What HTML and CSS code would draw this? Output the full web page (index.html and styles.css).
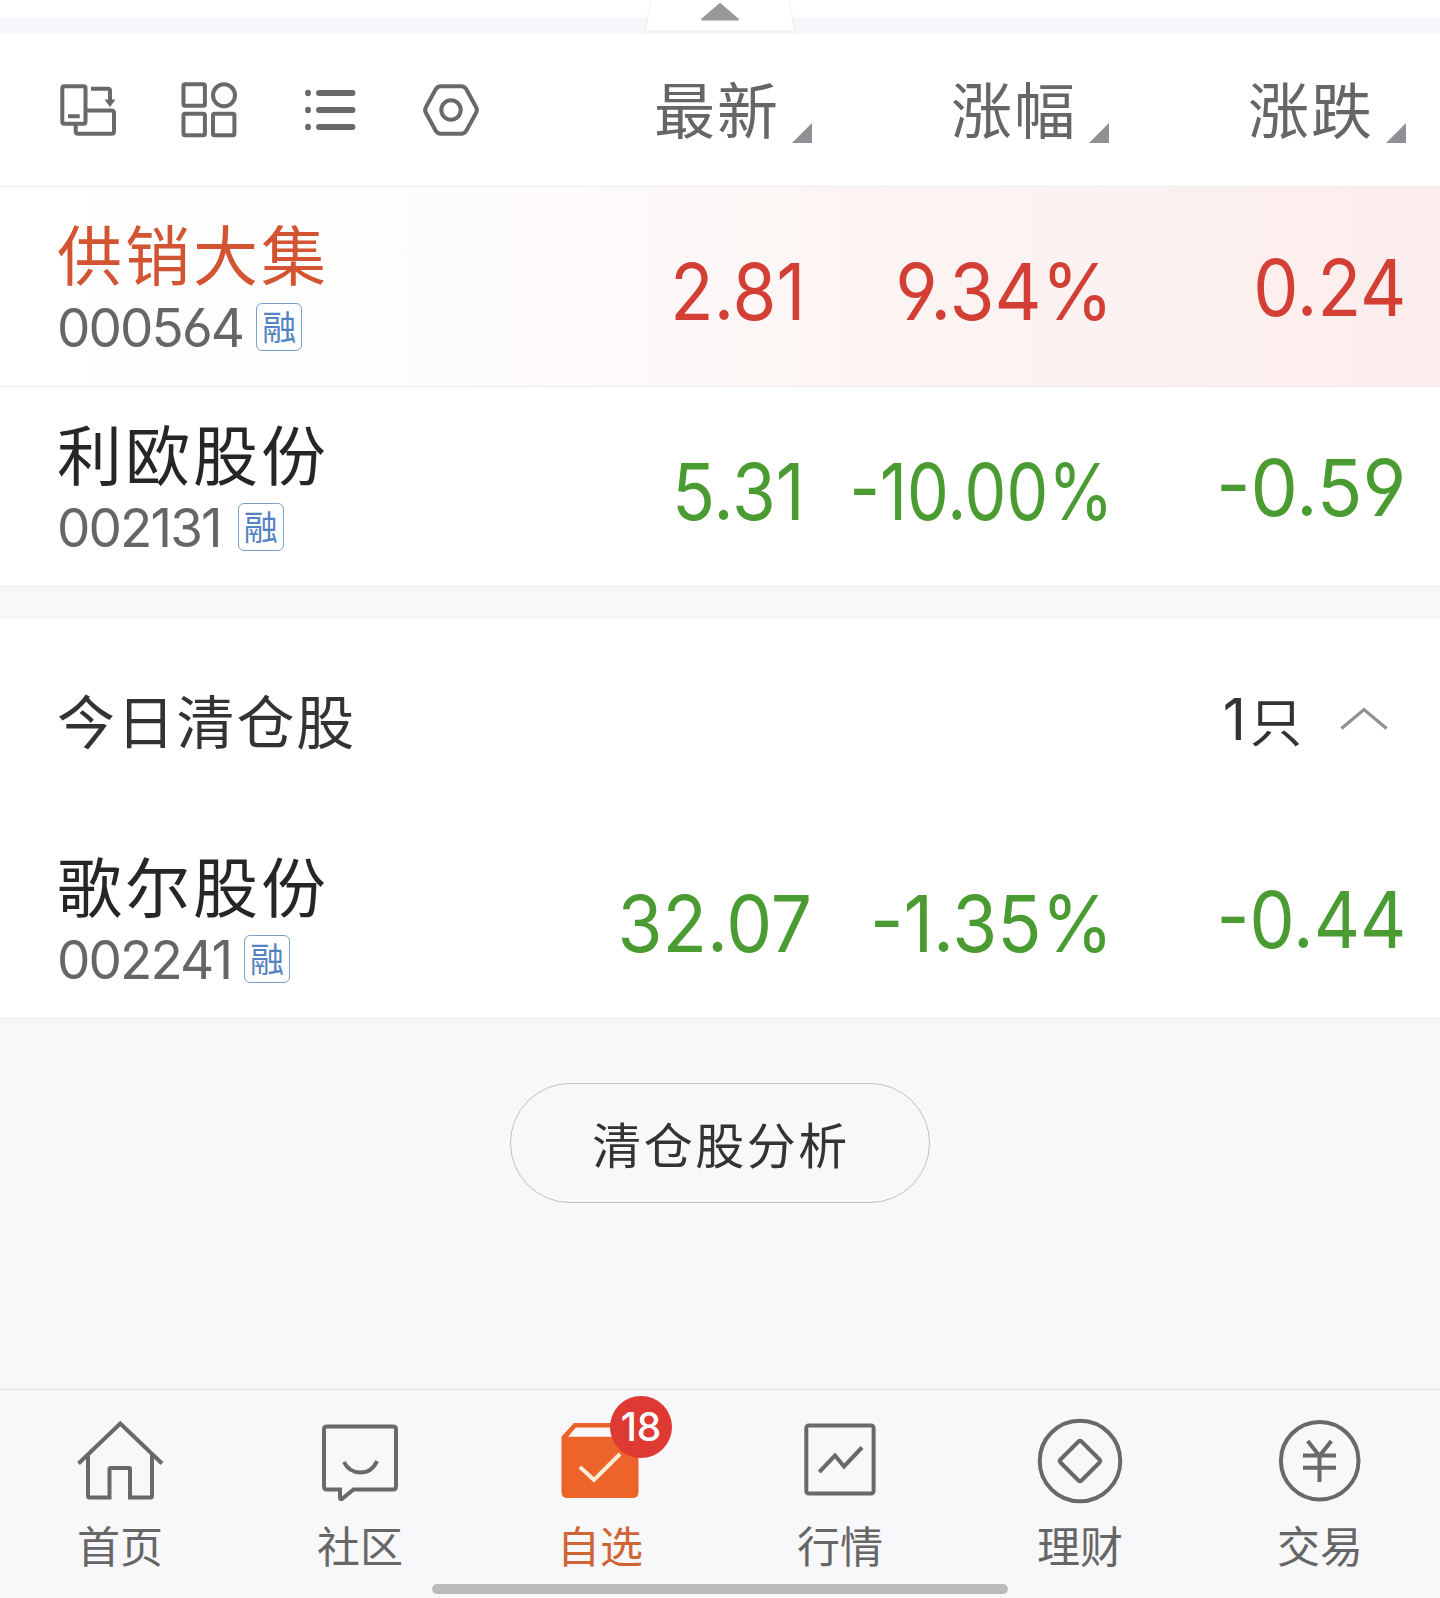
FILE: index.html
```html
<!DOCTYPE html>
<html lang="zh-CN">
<head>
<meta charset="utf-8">
<title>自选</title>
<link rel="stylesheet" href="styles.css">
</head>
<body>
<div class="app">
  <div class="strip">
    <svg class="pull-tab" width="152" height="34" viewBox="0 0 152 34"><path class="pull-shape" d="M8 -2 L2 30.5 H150 L144 -2 Z"/><path class="pull-arrow" d="M76 4 L94 19.5 H58 Z"/></svg>
  </div>

  <header class="toolbar">
    <div class="tools">
      <svg class="tool" viewBox="0 0 60 60"><rect x="4.3" y="6.3" width="23.2" height="37.5" rx="2"/><path d="M10 36.3H21.7M33 8.7H50Q52 8.7 52 10.7V21M29 30.5H53.5Q56 30.5 56 33V51.2Q56 53.7 53.5 53.7H20.2Q17.7 53.7 17.7 51.2V45"/><path class="solid" d="M46.500 19.500H57.500L52 27Z"/></svg>
      <svg class="tool" viewBox="0 0 60 60"><rect x="4.5" y="4.2" width="21.4" height="21.6" rx="1.5"/><circle cx="45" cy="15.3" r="11"/><rect x="4.5" y="33.8" width="21.4" height="21.4" rx="1.5"/><rect x="34" y="33.8" width="21.4" height="21.4" rx="1.5"/></svg>
      <svg class="tool list" viewBox="0 0 60 60"><path d="M19 13H52.5M19 30H52.5M19 47H52.5M8 12.7V13.3M8 29.7V30.3M8 46.7V47.3"/></svg>
      <svg class="tool" viewBox="0 0 60 60"><path d="M20 6.3H40Q43.5 6.3 45.3 9.3L55 27Q56.800 30 55 33L45.3 50.7Q43.5 53.7 40 53.7H20Q16.5 53.7 14.7 50.7L5 33Q3.2 30 5 27L14.7 9.3Q16.5 6.3 20 6.3Z"/><circle cx="30" cy="30" r="9.7"/></svg>
    </div>
    <div class="sort">最新<i class="corner"></i></div>
    <div class="sort">涨幅<i class="corner"></i></div>
    <div class="sort">涨跌<i class="corner"></i></div>
  </header>

  <main>
    <section class="stock up lit">
      <div class="ident"><div class="name">供销大集</div><div class="meta"><span class="code">000564</span><span class="tag">融</span></div></div>
      <div class="num price short"><span>2.81</span></div>
      <div class="num rate"><span>9.34%</span></div>
      <div class="num diff"><span>0.24</span></div>
    </section>
    <section class="stock down">
      <div class="ident"><div class="name">利欧股份</div><div class="meta"><span class="code narrow">002131</span><span class="tag">融</span></div></div>
      <div class="num price short"><span>5.31</span></div>
      <div class="num rate long"><span>-10.00%</span></div>
      <div class="num diff signed"><span>-0.59</span></div>
    </section>

    <div class="gap"></div>

    <div class="group">
      <h2 class="group-title">今日清仓股</h2>
      <div class="group-count"><span class="count-digit">1</span>只</div>
      <svg class="chevron" width="48" height="24" viewBox="0 0 48 24"><path d="M1.5 21.5L24 2.5L46.5 21.5"/></svg>
    </div>
    <section class="stock down">
      <div class="ident"><div class="name">歌尔股份</div><div class="meta"><span class="code">002241</span><span class="tag">融</span></div></div>
      <div class="num price"><span>32.07</span></div>
      <div class="num rate"><span>-1.35%</span></div>
      <div class="num diff"><span>-0.44</span></div>
    </section>
  </main>

  <div class="analysis"><button class="pill">清仓股分析</button></div>

  <nav class="tabs">
    <a class="tab"><svg class="glyph" viewBox="0 0 88 88"><path d="M2.5 45.5L44.3 5.5L86 45.5M12 37V78Q12 79.5 13.5 79.5H33.5V51Q33.5 50 34.5 50H53Q54 50 54 51V79.5H74.5Q76 79.5 76 78V37"/></svg>首页</a>
    <a class="tab"><svg class="glyph" viewBox="0 0 88 88"><path d="M11 8.5H77Q80 8.5 80 11.5V68.5Q80 71.5 77 71.5H37.5L26.5 80.5Q24 82 24 79.5V71.5H11Q8 71.5 8 68.5V11.5Q8 8.5 11 8.5Z"/><path d="M28 44Q33 54.5 44.5 54.5Q56 54.5 61 43"/></svg>社区</a>
    <a class="tab active"><svg class="glyph" viewBox="0 0 88 88"><path class="box" fill-rule="evenodd" d="M18 5H70L82.5 18V74Q82.5 80 76.5 80H11.5Q5.5 80 5.5 74V18.5ZM20 9.5L12 18.7H77L68 9.5Z"/><path class="tick" d="M24 49L38 62L64 36"/></svg><span class="badge">18</span>自选</a>
    <a class="tab"><svg class="glyph" viewBox="0 0 88 88"><rect x="10.3" y="7.5" width="67.3" height="68" rx="2.5"/><path d="M23.3 54L39 37.5L48 48.5L66 29.5"/></svg>行情</a>
    <a class="tab"><svg class="glyph" viewBox="0 0 88 88"><circle cx="44" cy="43" r="40.3"/><path d="M42.5 23.5Q44 22 45.5 23.5L63.5 41.5Q65 43 63.5 44.5L45.5 62.5Q44 64 42.5 62.5L24.5 44.5Q23 43 24.5 41.5Z"/></svg>理财</a>
    <a class="tab"><svg class="glyph" viewBox="0 0 88 88"><circle cx="43.7" cy="42.7" r="38.8"/><path d="M31.700 23L43.5 38L55.300 23M43.5 37V64M27 37.5H60M27 49.7H60"/></svg>交易</a>
    <div class="home-bar"></div>
  </nav>
</div>
</body>
</html>
```

FILE: styles.css
```css
* { box-sizing: border-box; }
body {
  margin: 0;
  background: #f7f8fa;
  font-family: "Noto Sans CJK SC", sans-serif;
  color: #333;
}
.app { width: 1440px; height: 1598px; display: flex; flex-direction: column; overflow: hidden; }
svg { fill: none; stroke: #696969; stroke-width: 4; }

.strip {
  height: 34px;
  flex: none;
  display: flex;
  justify-content: center;
  background: linear-gradient(#fff 18px, #f5f7fa 18px);
}
.pull-tab { display: block; filter: drop-shadow(0 0 1px rgba(0,0,0,.14)); }
.pull-shape { fill: #fff; stroke: none; }
.pull-arrow { fill: #999; stroke: #999; stroke-width: 2; stroke-linejoin: round; }

.toolbar, .stock {
  display: grid;
  grid-template-columns: 1fr 297px 297px 297px;
  padding-right: 34px;
  background: #fff;
}
.toolbar { height: 153px; flex: none; border-bottom: 1px solid #ececee; }
.tools { display: flex; gap: 61px; padding: 46px 0 0 58px; }
.tool { width: 60px; height: 60px; flex: none; }
.tool .solid { fill: #696969; stroke: none; }
.tool.list { stroke-width: 5.8; stroke-linecap: round; }
.sort {
  display: flex;
  justify-content: flex-end;
  padding-top: 40px;
  font-size: 61px;
  line-height: 68px;
  letter-spacing: 2px;
  color: #666;
}
.corner {
  width: 20px;
  height: 20px;
  margin: 49px 0 0 12px;
  background: #8f8f94;
  clip-path: polygon(100% 0, 100% 100%, 0 100%);
}

.stock { height: 200px; border-bottom: 1px solid #ececee; }
.stock.lit { background: linear-gradient(90deg, #fff 0, #fefcfb 34%, #fcf5f4 60%, #fcedec 100%); }
.ident { padding: 32px 0 0 57px; }
.name { font-size: 65px; line-height: 66px; letter-spacing: 3px; color: #262626; white-space: nowrap; }
.up .name { color: #d35432; }
.meta { display: flex; gap: 13px; margin-top: 18px; }
.code {
  font-family: Inter, sans-serif;
  font-feature-settings: "cv03", "cv04";
  font-size: 53px;
  line-height: 50px;
  letter-spacing: -1.9px;
  color: #666;
}
.code.narrow { margin-right: 4px; }
.tag {
  width: 46px;
  height: 48px;
  border: 1px solid #7ba0c8;
  border-radius: 6px;
  background: #fff;
  color: #5484c0;
  font-size: 34px;
  line-height: 43px;
  text-align: center;
}
.num {
  display: flex;
  justify-content: flex-end;
  padding-top: 65px;
  font-family: Inter, sans-serif;
  font-feature-settings: "cv03", "cv04";
  font-size: 78px;
  line-height: 80px;
  white-space: nowrap;
}
.num span { transform: scaleX(.935); transform-origin: right; }
.num.short { padding-right: 7px; }
.num.short span { transform: scaleX(.91); }
.num.rate { margin-right: -4px; }
.num.long span { transform: scaleX(.85); }
.num.diff { padding-top: 61px; }
.num.diff span { transform: scaleX(.92); }
.num.signed span { transform: scaleX(.965); }
.up .num { color: #d33e35; }
.down .num { color: #4b9b33; }

.gap { height: 32px; background: #f7f8fa; }
.group {
  height: 200px;
  display: flex;
  align-items: center;
  padding: 0 52px 0 57px;
  background: #fff;
}
.group-title { margin: 0 auto 0 0; font-size: 58px; font-weight: 400; letter-spacing: 1.8px; }
.group-count { display: flex; align-items: center; font-size: 52px; }
.count-digit { font-family: Inter, sans-serif; font-size: 57px; letter-spacing: 4px; }
.chevron { margin-left: 38px; stroke: #909090; stroke-width: 3.2; }

.analysis { padding-top: 64px; display: flex; justify-content: center; flex: 1; }
.pill {
  width: 420px;
  height: 120px;
  padding: 0 0 2px 2px;
  border: 1px solid #bfc0c2;
  border-radius: 60px;
  background: transparent;
  font: 49px "Noto Sans CJK SC", sans-serif;
  letter-spacing: 2.5px;
  color: #333;
}

.tabs {
  position: relative;
  height: 209px;
  flex: none;
  display: grid;
  grid-template-columns: repeat(6, 1fr);
  border-top: 1px solid #e2e3e5;
  background: #f8f8fa;
}
.tab {
  position: relative;
  display: flex;
  flex-direction: column;
  align-items: center;
  padding-top: 28px;
  font-size: 43px;
  line-height: 76px;
  color: #666;
}
.tab.active { color: #cf6535; }
.glyph { width: 88px; height: 88px; flex: none; }
.box { fill: #ed642b; stroke: none; }
.tick { stroke: #fdebd8; }
.badge {
  position: absolute;
  left: 130px;
  top: 6px;
  width: 62px;
  height: 62px;
  border-radius: 50%;
  background: #de3a33;
  color: #fff;
  font: 500 39px/62px Inter, sans-serif;
  text-align: center;
}
.home-bar {
  position: absolute;
  left: 432px;
  bottom: 4px;
  width: 576px;
  height: 10px;
  border-radius: 5px;
  background: #bbb;
}
```
